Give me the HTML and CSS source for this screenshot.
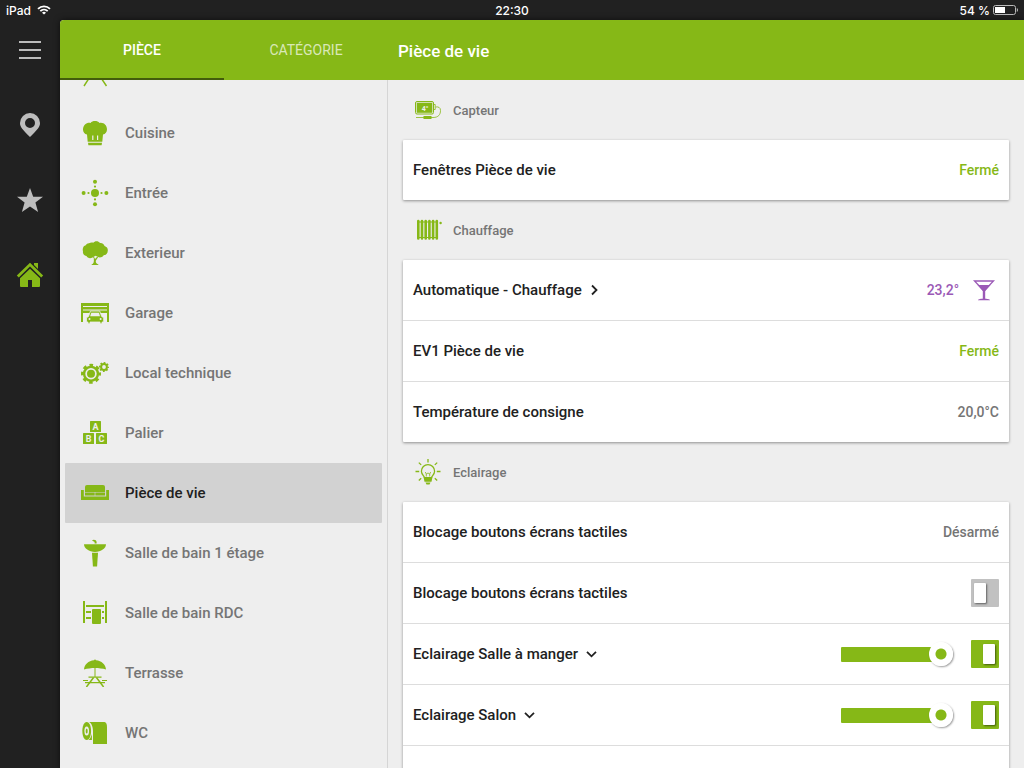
FILE: index.html
```html
<!DOCTYPE html>
<html lang="fr">
<head>
  <meta charset="UTF-8">
  <meta name="viewport" content="width=device-width, initial-scale=1.0">
  <title>Pièce de vie</title>
  <link rel="stylesheet" href="styles.css">
</head>
<body>

  <!-- Status bar -->
  <div class="status">
    <div class="status-left">
      <span>iPad</span>
      <svg width="14" height="10" viewBox="0 0 14 10" fill="none" stroke="#fff" stroke-width="1.8">
        <path d="M1 3.8a8.6 8.6 0 0 1 12 0"/>
        <path d="M3.3 6.2a5.3 5.3 0 0 1 7.4 0"/>
        <path d="M7 9.6 5 7.7a2.8 2.8 0 0 1 4 0z" fill="#fff" stroke="none"/>
      </svg>
    </div>
    <div class="status-time">22:30</div>
    <div class="status-right">
      <span>54 %</span>
      <svg width="25" height="10" viewBox="0 0 25 10">
        <rect x=".5" y=".5" width="22" height="9" rx="2" fill="none" stroke="#bbb"/>
        <rect x="2" y="2" width="10" height="6" fill="#fff"/>
        <path d="M23.8 3v4q1.2-.6 1.2-2t-1.2-2z" fill="#bbb"/>
      </svg>
    </div>
  </div>

  <div class="shell">

    <!-- Left rail -->
    <nav class="rail">
      <button class="rail-btn" aria-label="Menu">
        <svg width="28" height="28" viewBox="0 0 28 28" stroke="currentColor" stroke-width="2"><path d="M3 6h22M3 14h22M3 22h22"/></svg>
      </button>
      <button class="rail-btn" aria-label="Lieux">
        <svg width="28" height="28" viewBox="0 0 28 28" fill="currentColor" fill-rule="evenodd"><path d="M14 2a10 10 0 0 1 10 10c0 4-2.500 6.500-10 14C6.500 18.500 4 16 4 12A10 10 0 0 1 14 2zm0 5a5 5 0 1 0 0 10 5 5 0 0 0 0-10z"/></svg>
      </button>
      <button class="rail-btn" aria-label="Favoris">
        <svg width="28" height="28" viewBox="0 0 28 28" fill="currentColor"><path d="M14 2l3.200 8.700 9.800.1-7.600 5.600 2.700 9.600-8.100-5.600L5.900 26l2.700-9.600L1 10.800l9.800-.1z"/></svg>
      </button>
      <button class="rail-btn active" aria-label="Maison">
        <svg width="28" height="28" viewBox="0 0 28 28" fill="currentColor">
          <path d="M18 2h4v6l-4-4z"/>
          <path d="M1.800 15.500 14 3.600l12.200 11.900" fill="none" stroke="currentColor" stroke-width="2.800"/>
          <path d="M4 17.200 14 7.800l10 9.400V25a1 1 0 0 1-1 1h-7v-7h-4v7H5a1 1 0 0 1-1-1z"/>
        </svg>
      </button>
    </nav>

    <div class="app">
      <header class="topbar">
        <div class="tabs">
          <button class="tab selected">PIÈCE</button>
          <button class="tab">CATÉGORIE</button>
        </div>
        <h1>Pièce de vie</h1>
      </header>

      <div class="panes">

        <!-- Rooms, scrolled to the end -->
        <ul class="rooms">
          <li class="room">
            <svg width="28" height="28" viewBox="0 0 28 28" fill="none" stroke="currentColor" stroke-width="1.500"><path d="M2 12h24M14 10 3 27M14 10l11.500 17"/></svg>
          </li>
          <li>
            <a class="room" href="#">
              <svg width="28" height="28" viewBox="0 0 28 28" fill="currentColor">
                <path d="M6 15.600C3.500 15 2 13 2 10.500 2 6 6 3.200 9.500 4c2-2.600 7-2.600 9 0C22.500 3 26 6.300 26 10.200c0 2.800-1.600 4.800-4 5.400l-.7 7.200H6.700z"/>
                <path d="M7 23.800h14l-.4 2.500H7.400z"/>
                <path d="M11.800 16.500v4.500M16.600 16.500v4.500" stroke="#eee" stroke-width="1.200"/>
              </svg>
              Cuisine
            </a>
          </li>
          <li>
            <a class="room" href="#">
              <svg width="28" height="28" viewBox="0 0 28 28" fill="currentColor">
                <circle cx="14" cy="14" r="4"/>
                <circle cx="2.600" cy="14" r="2"/><circle cx="25.400" cy="14" r="2"/>
                <circle cx="14" cy="2.800" r="2"/><circle cx="14" cy="25.200" r="2"/>
                <circle cx="7.500" cy="14" r="1.100"/><circle cx="20.500" cy="14" r="1.100"/>
                <circle cx="14" cy="7.600" r="1.100"/><circle cx="14" cy="20.400" r="1.100"/>
              </svg>
              Entrée
            </a>
          </li>
          <li>
            <a class="room" href="#">
              <svg width="28" height="28" viewBox="0 0 28 28" fill="currentColor">
                <path d="M8 4.300c1.500-1 3.200-.8 4.200-.6 1.500-2 5.200-2.200 6.800.2 2.500-.2 4.200 1.200 4.500 3.200 2.600.8 3.800 3 3.200 4.800.2 2.600-1.700 4.300-4 4.300-1.500 2.200-4 3-6 1.500l-2.200-1-3 1.800c-2.500 1.300-5 .5-6-1.500-2.500-.3-4-2.300-3.500-4.500-1-3.500.8-6 2.800-6.300.5-1 1.800-1.900 3.200-1.900z"/>
                <path d="M12.800 19.200 11 17l2.400 1.500.6 1.500 2.200-2.300 1 .4-2.400 3.600c-.2 1.800.5 2.800 2.600 3.700V26h-6.800v-.6c2.200-.8 2.500-2.500 2.200-6.200z"/>
              </svg>
              Exterieur
            </a>
          </li>
          <li>
            <a class="room" href="#">
              <svg width="28" height="28" viewBox="0 0 28 28" fill="currentColor">
                <path d="M0 4h28v19h-2V7H2v16H0z"/>
                <path d="M2 8h24v2.400H2zM2 11.500h24V14H2z"/>
                <path d="M9.500 12h9.200l2 5.500 2 1.200v4.300H21v1.700h-2V23H9v1.700H7V23H5.500v-4.300l2-1.200z" stroke="#eee" stroke-width=".8"/>
                <path d="M10.300 13.800h7.600l1.100 3.500H9.200z" fill="#eee"/>
                <circle cx="8.500" cy="20" r="1" fill="#eee"/><circle cx="19.600" cy="20" r="1" fill="#eee"/>
              </svg>
              Garage
            </a>
          </li>
          <li>
            <a class="room" href="#">
              <svg width="28" height="28" viewBox="0 0 28 28" fill="none" stroke="currentColor">
                <circle cx="10" cy="14.800" r="6.900" stroke-width="2.400"/>
                <circle cx="10" cy="14.800" r="8.500" stroke-width="3" stroke-dasharray="3.500 3.176" stroke-dashoffset="1.750"/>
                <circle cx="10" cy="14.800" r="4" fill="currentColor" stroke="none"/>
                <circle cx="23" cy="8" r="2.900" stroke-width="2"/>
                <circle cx="23" cy="8" r="4.200" stroke-width="1.800" stroke-dasharray="1.700 1.599" stroke-dashoffset=".85"/>
              </svg>
              Local technique
            </a>
          </li>
          <li>
            <a class="room" href="#">
              <svg class="blocks" width="28" height="28" viewBox="0 0 28 28" fill="currentColor">
                <rect x="9" y="2" width="11" height="11" rx=".5"/>
                <rect x="2" y="14" width="11" height="11" rx=".5"/>
                <rect x="15" y="14" width="11" height="11" rx=".5"/>
                <text x="14.500" y="10.700">A</text><text x="7.700" y="22.700">B</text><text x="20.500" y="22.700">C</text>
              </svg>
              Palier
            </a>
          </li>
          <li>
            <a class="room current" href="#">
              <svg width="28" height="28" viewBox="0 0 28 28" fill="currentColor">
                <path d="M6 6h16a2 2 0 0 1 2 2v5H4V8a2 2 0 0 1 2-2z"/>
                <path d="M4 13.600h9.700v3H4zM14.300 13.600H24v3h-9.700z"/>
                <path d="M0 11h2.800v6.500h22.400V11H28v10H0z"/>
              </svg>
              Pièce de vie
            </a>
          </li>
          <li>
            <a class="room" href="#">
              <svg width="28" height="28" viewBox="0 0 28 28" fill="currentColor">
                <path d="M11 1.600C12 .3 15.500.5 15.600 3v1.500h-2V3z"/>
                <path d="M3 5.300h22c0 4-5 7.700-11 7.700S3 9.300 3 5.300z"/>
                <path d="M11 13.800h6l-.9 13.700h-4.200z"/>
              </svg>
              Salle de bain 1 étage
            </a>
          </li>
          <li>
            <a class="room" href="#">
              <svg width="28" height="28" viewBox="0 0 28 28" fill="currentColor">
                <path d="M2 2h2v22H2zM24 2h2v22h-2zM5 6h18v2H5zM5 12h5v2H5zM5 18h5v2H5zM21 12h2v2h-2zM21 18h2v2h-2z"/>
                <rect x="11" y="10" width="9" height="15" rx="1"/>
              </svg>
              Salle de bain RDC
            </a>
          </li>
          <li>
            <a class="room" href="#">
              <svg width="28" height="28" viewBox="0 0 28 28" fill="none" stroke="currentColor">
                <path d="M3 10.600C3.300 5.500 7.500 1.700 13 1.200L14 .3l1 .9c5.500.5 9.700 4.300 10 9.400-7-2-15-2-22 0z" fill="currentColor" stroke="none"/>
                <path d="M14 9v9"/>
                <path d="M7.500 18.200h13M2 21.500h5M21 21.500h5M4 23.600h20" stroke-width="1.200"/>
                <path d="M12.600 18.500 5.400 28M15.400 18.500l7.200 9.500" stroke-width="1.500"/>
              </svg>
              Terrasse
            </a>
          </li>
          <li>
            <a class="room" href="#">
              <svg width="28" height="28" viewBox="0 0 28 28" fill="currentColor">
                <path d="M5.700 3c5.800 0 5.800 18 0 18S-.1 3 5.700 3z"/>
                <ellipse cx="5.700" cy="12" rx="2.300" ry="4.500" fill="#eee"/>
                <ellipse cx="5.700" cy="12" rx="1" ry="2.500"/>
                <path d="M8 3h15.500Q26 3.500 26 8v17H12V12c0-4-1.400-8-4-9z"/>
                <path d="M10.900 15v6H7.500c1.600-1.200 2.800-3.500 3.400-6z"/>
              </svg>
              WC
            </a>
          </li>
        </ul>

        <!-- Controls of the selected room -->
        <main class="controls">
          <section>
            <h2>
              <svg class="sensor" width="28" height="28" viewBox="0 0 28 28" fill="none" stroke="currentColor">
                <rect x="1.500" y="5.500" width="18" height="12.500" rx="1.500"/>
                <rect x="2.700" y="6.700" width="15.600" height="10.100" fill="currentColor" stroke="none"/>
                <text x="11" y="14.500">4°</text>
                <path d="M20 8.500h1.200v5H20M21.500 11c3-.5 5 .5 5 3.500 0 4-2 7-7.500 7M2 21.500h17" stroke-width=".8"/>
                <path d="M9.500 21.500h8" stroke-width="3"/>
              </svg>
              Capteur
            </h2>
            <div class="card">
              <div class="row">
                <span class="name">Fenêtres Pièce de vie</span>
                <span class="value on">Fermé</span>
              </div>
            </div>
          </section>

          <section>
            <h2>
              <svg width="28" height="28" viewBox="0 0 28 28" fill="none" stroke="currentColor">
                <path d="M4.300 5v17.500M8 5v17.500M11.700 5v17.500M15.400 5v17.500M19.100 5v17.500M22.800 5v17.500" stroke-width="2.600" stroke-linecap="round"/>
                <path d="M4 6h19.500M4 21.500h19.500"/>
                <circle cx="26.600" cy="7" r="1.200" fill="currentColor" stroke="none"/>
              </svg>
              Chauffage
            </h2>
            <div class="card">
              <div class="row">
                <a class="name" href="#">
                  Automatique - Chauffage
                  <svg width="8" height="12" viewBox="0 0 8 12" fill="none" stroke="currentColor" stroke-width="1.800"><path d="M2 1.500 6.500 6 2 10.500"/></svg>
                </a>
                <span class="value comfort">23,2°</span>
                <svg class="comfort" width="28" height="28" viewBox="0 0 28 28" fill="currentColor">
                  <path d="M3.500 5h19L13 15z" fill="none" stroke="currentColor" stroke-width="1.300"/>
                  <path d="M6.500 9h13l-5.300 6v7.500c1 .4 4.800.5 4.800 1.700H7c0-1.200 3.800-1.300 4.800-1.700V15z"/>
                </svg>
              </div>
              <div class="row">
                <span class="name">EV1 Pièce de vie</span>
                <span class="value on">Fermé</span>
              </div>
              <div class="row">
                <span class="name">Température de consigne</span>
                <span class="value">20,0°C</span>
              </div>
            </div>
          </section>

          <section>
            <h2>
              <svg width="28" height="28" viewBox="0 0 28 28" fill="none" stroke="currentColor" stroke-width="1.300">
                <path d="M10.400 19.500c0-1.500-3-3-3-6.300a6.600 6.600 0 0 1 13.200 0c0 3.300-3 4.800-3 6.300"/>
                <path d="M12.300 18.500v-2.500l-1-2M15.700 18.500v-2.500l1-2M12.300 16l1.700-1 1.700 1" stroke-width=".8"/>
                <path d="M9.500 19h9l-1 4.800h-7zM11.500 24.600h5l-1 2h-3z" fill="currentColor" stroke="none"/>
                <path d="M14 1v3.500M1.500 13.500h3.700M22.800 13.500h3.700M4.800 4.600l2.400 2.300M23.200 4.600l-2.400 2.300M4.800 22.500l2.400-2.300M23.200 22.500l-2.400-2.300"/>
              </svg>
              Eclairage
            </h2>
            <div class="card">
              <div class="row">
                <span class="name">Blocage boutons écrans tactiles</span>
                <span class="value">Désarmé</span>
              </div>
              <div class="row">
                <label class="name" for="blocage">Blocage boutons écrans tactiles</label>
                <input class="switch" type="checkbox" id="blocage">
              </div>
              <div class="row">
                <label class="name" for="manger">Eclairage Salle à manger
                  <svg width="12" height="8" viewBox="0 0 12 8" fill="none" stroke="currentColor" stroke-width="1.800"><path d="M1 1.800 5.500 6.300 10 1.800"/></svg>
                </label>
                <input class="slider" type="range" value="100" aria-label="Eclairage Salle à manger">
                <input class="switch" type="checkbox" id="manger" checked>
              </div>
              <div class="row">
                <label class="name" for="salon">Eclairage Salon
                  <svg width="12" height="8" viewBox="0 0 12 8" fill="none" stroke="currentColor" stroke-width="1.800"><path d="M1 1.800 5.500 6.300 10 1.800"/></svg>
                </label>
                <input class="slider" type="range" value="100" aria-label="Eclairage Salon">
                <input class="switch" type="checkbox" id="salon" checked>
              </div>
              <div class="row"></div>
            </div>
          </section>
        </main>

      </div>
    </div>
  </div>

</body>
</html>
```
FILE: styles.css
```css
* {
  margin: 0;
  padding: 0;
  box-sizing: border-box;
}

body {
  height: 100vh;
  display: flex;
  flex-direction: column;
  overflow: hidden;
  background: #212121;
  color: #212121;
  font-family: Roboto, "Liberation Sans", sans-serif;
  font-size: 15px;
  font-weight: 500;
}

button {
  border: none;
  background: none;
  font: inherit;
  color: inherit;
  cursor: pointer;
}

a {
  color: inherit;
  text-decoration: none;
}

svg {
  flex: none;
}

/* Status bar */
.status {
  height: 20px;
  padding: 0 6px;
  display: grid;
  grid-template-columns: 1fr auto 1fr;
  align-items: center;
  color: #fff;
  font-family: Inter, "Liberation Sans", sans-serif;
  font-size: 12px;
}

.status-left,
.status-right {
  display: flex;
  align-items: center;
  gap: 6px;
}

.status-right {
  justify-content: flex-end;
  gap: 3px;
}

/* Rail */
.shell {
  flex: 1;
  min-height: 0;
  display: flex;
}

.rail {
  width: 60px;
  display: flex;
  flex-direction: column;
  gap: 15px;
}

.rail-btn {
  height: 60px;
  display: flex;
  align-items: center;
  justify-content: center;
  color: #bdbdbd;
}

.rail-btn.active {
  color: #86b817;
}

/* App */
.app {
  flex: 1;
  min-width: 0;
  display: flex;
  flex-direction: column;
  overflow: hidden;
  background: #eee;
  border-top-left-radius: 4px;
  box-shadow: 0 0 6px rgba(0, 0, 0, 0.6);
}

.topbar {
  height: 60px;
  display: flex;
  align-items: center;
  background: #86b817;
  color: #fff;
}

.tabs {
  width: 328px;
  height: 100%;
  display: flex;
}

.tab {
  flex: 1;
  border-top: 2px solid transparent;
  border-bottom: 2px solid transparent;
  font-size: 14px;
  font-weight: 400;
  color: rgba(255, 255, 255, 0.7);
}

.tab.selected {
  font-weight: 500;
  color: #fff;
  border-bottom-color: #435c0c;
}

.topbar h1 {
  padding: 2px 10px 0;
  font-size: 17px;
  font-weight: 500;
}

.panes {
  flex: 1;
  min-height: 0;
  display: flex;
}

/* Rooms */
.rooms {
  width: 328px;
  padding: 5px;
  display: flex;
  flex-direction: column;
  justify-content: flex-end;
  overflow: hidden;
  list-style: none;
  border-right: 1px solid #d5d5d5;
}

.room {
  height: 60px;
  flex: none;
  padding: 0 16px;
  display: flex;
  align-items: center;
  gap: 16px;
  line-height: 19px;
  color: #757575;
}

.room svg {
  color: #86b817;
}

.room.current {
  background: #d2d2d2;
  color: #212121;
  border-radius: 1px;
}

.blocks text {
  fill: #eee;
  font-size: 9px;
  font-weight: 700;
  text-anchor: middle;
}

/* Controls */
.controls {
  flex: 1;
  min-width: 0;
  padding: 0 15px;
  overflow: hidden;
}

.controls h2 {
  height: 60px;
  padding-left: 11px;
  display: flex;
  align-items: center;
  gap: 11px;
  font-size: 13px;
  font-weight: 500;
  color: #757575;
}

.controls h2 svg,
.value.on {
  color: #86b817;
}

.sensor text {
  fill: #eee;
  stroke: none;
  font-size: 7px;
  font-weight: 700;
  text-anchor: middle;
}

.card {
  background: #fff;
  border-radius: 1px;
  box-shadow: 0 1px 3px rgba(0, 0, 0, 0.4);
}

.row {
  height: 60px;
  padding: 0 10px;
  display: flex;
  align-items: center;
  gap: 12px;
}

.row + .row {
  height: 61px;
  border-top: 1px solid #ddd;
}

.name {
  margin-right: auto;
  display: flex;
  align-items: center;
  gap: 8px;
  line-height: 19px;
}

.value {
  font-size: 14px;
  color: #757575;
}

.comfort {
  color: #9b59b6;
}

/* Slider */
.slider {
  appearance: none;
  width: 112px;
  height: 24px;
  margin-right: 6px;
  background: none;
}

.slider::-webkit-slider-runnable-track {
  height: 15px;
  border-radius: 1px;
  background: linear-gradient(to right, #86b817 95%, transparent 95%);
}

.slider::-webkit-slider-thumb {
  appearance: none;
  width: 24px;
  height: 24px;
  margin-top: -5px;
  border-radius: 50%;
  background: radial-gradient(circle, #86b817 5px, #fff 6px);
  box-shadow: 1px 1px 2px rgba(0, 0, 0, 0.4);
}

/* Switch */
.switch {
  appearance: none;
  width: 28px;
  height: 28px;
  padding: 4px 4px 4px 3px;
  display: flex;
  background: #c1c1c1;
  border-radius: 1px;
}

.switch::before {
  content: "";
  width: 12px;
  height: 20px;
  background: #fff;
  border-radius: 1px;
  box-shadow: 1px 1px 2px rgba(0, 0, 0, 0.5);
}

.switch:checked {
  justify-content: flex-end;
  background: #86b817;
}
```
